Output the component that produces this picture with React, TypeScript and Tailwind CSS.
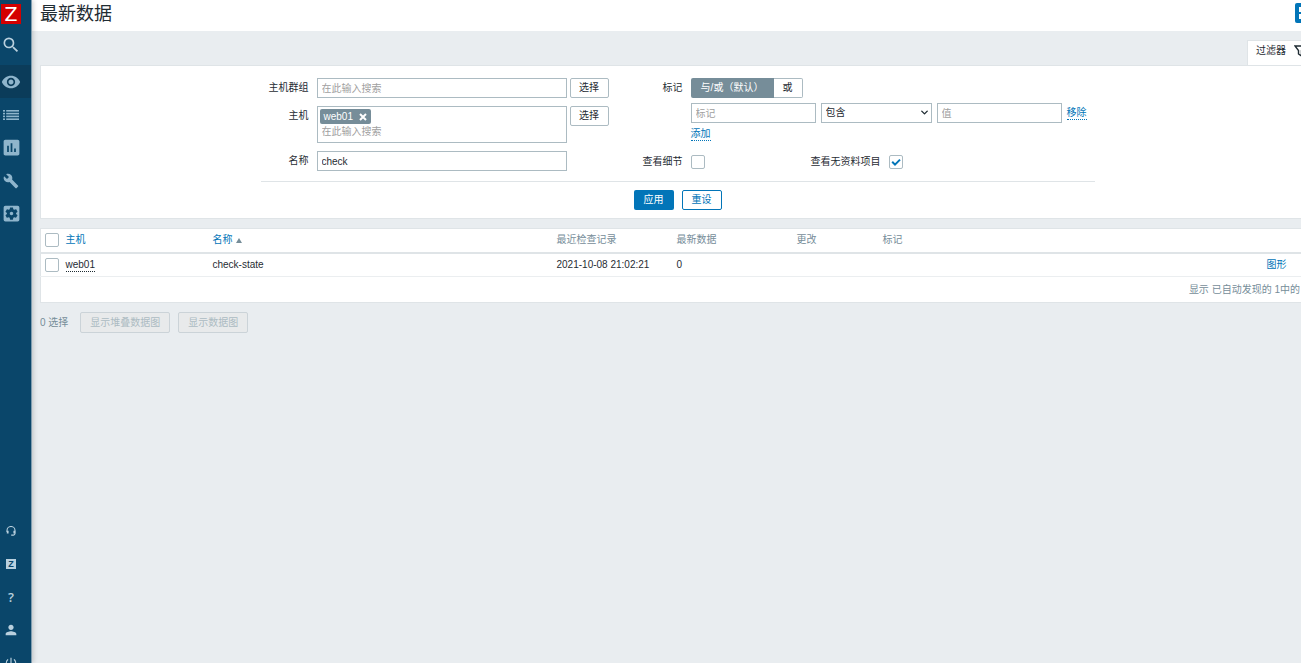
import { ReactNode } from 'react';
import clsx from 'clsx';
import {
  MdSearch,
  MdVisibility,
  MdInsertChart,
  MdBuild,
  MdSettingsApplications,
  MdPerson,
  MdPowerSettingsNew,
} from 'react-icons/md';
import { LuChevronDown } from 'react-icons/lu';

const field =
  'h-5 border border-[#acbbc2] bg-white px-1 text-[10px] text-[#1f2c33] placeholder:text-[#a0a0a0] outline-none';
const link = 'text-[#0275b8] border-b border-dotted border-[#0275b8]';

function ListIcon() {
  return (
    <svg viewBox="0 0 16 10" className="w-4 h-[10px]" fill="currentColor">
      {[0, 2.8, 5.6, 8.4].map((y) => (
        <g key={y}>
          <rect x="0" y={y} width="2" height="1.6" />
          <rect x="3.2" y={y} width="12.8" height="1.6" />
        </g>
      ))}
    </svg>
  );
}

function SupportIcon() {
  return (
    <svg viewBox="0 0 10 10" className="w-[10px] h-[10px]" fill="none" stroke="currentColor">
      <path d="M1 6V4.5a4 4 0 0 1 8 0V7.5a1.6 1.6 0 0 1-1.6 1.6H5.2" strokeWidth="1.1" />
      <path d="M1.7 4.8v2.7M8.3 4.8v2.7" strokeWidth="1.8" />
    </svg>
  );
}

const mainNav = [
  { label: '监测', icon: <MdVisibility size={20} />, active: true },
  { label: '资产记录', icon: <ListIcon /> },
  { label: '报表', icon: <MdInsertChart size={21} /> },
  { label: '配置', icon: <MdBuild size={16} /> },
  { label: '管理', icon: <MdSettingsApplications size={21} /> },
];

const userNav = [
  { label: '支持', icon: <SupportIcon /> },
  {
    label: 'Share',
    icon: (
      <span className="w-[10px] h-[10px] bg-[#b9d0de] text-[#0a466a] text-[9px] leading-[10px] font-bold text-center">
        Z
      </span>
    ),
  },
  { label: '帮助', icon: <span className="font-['Open_Sans',sans-serif] text-[13px] font-semibold leading-4">?</span> },
  { label: '用户', icon: <MdPerson size={16} /> },
  { label: '退出', icon: <MdPowerSettingsNew size={14} /> },
];

function NavItem({ label, active, children }: { label: string; active?: boolean; children: ReactNode }) {
  return (
    <a
      href="#"
      aria-label={label}
      className={clsx('flex h-[33px] items-center', active && 'bg-[#0b3c5a]')}
    >
      <span className="flex w-[22px] justify-center">{children}</span>
    </a>
  );
}

function Sidebar() {
  return (
    <aside className="z-10 flex h-screen w-8 shrink-0 flex-col overflow-hidden border-r border-[#7f9db0] bg-[#0a466a] text-[#8fb5cc] shadow-[1px_0_5px_rgba(0,0,0,0.2)]">
      <a
        href="#"
        className="ml-px mt-1 flex h-5 w-5 shrink-0 items-center justify-center bg-[#d40000] font-['DejaVu_Sans',sans-serif] text-[19px] leading-5 text-white"
      >
        Z
      </a>
      <button type="button" aria-label="搜索" className="flex h-[41px] w-[22px] shrink-0 items-center justify-center text-[#b9d0de]">
        <MdSearch size={20} />
      </button>
      <nav className="shrink-0">
        {mainNav.map((item) => (
          <NavItem key={item.label} label={item.label} active={item.active}>
            {item.icon}
          </NavItem>
        ))}
      </nav>
      <nav className="-mb-4 mt-auto shrink-0 text-[#b9d0de]">
        {userNav.map((item) => (
          <NavItem key={item.label} label={item.label}>
            {item.icon}
          </NavItem>
        ))}
      </nav>
    </aside>
  );
}

function SelectButton() {
  return (
    <button type="button" className="h-5 w-[39px] shrink-0 rounded-[2px] border border-[#acbbc2] bg-white">
      选择
    </button>
  );
}

function Checkbox({ id, label, checked }: { id: string; label?: string; checked?: boolean }) {
  return (
    <span className="relative block h-[14px] w-[14px] shrink-0">
      <input
        id={id}
        type="checkbox"
        aria-label={label}
        defaultChecked={checked}
        className="peer block h-[14px] w-[14px] appearance-none rounded-[2px] border border-[#acbbc2] bg-white"
      />
      <svg
        viewBox="0 0 14 14"
        className="pointer-events-none absolute inset-0 hidden peer-checked:block"
        fill="none"
        stroke="#0275b8"
        strokeWidth="2"
      >
        <path d="M3.2 6.8l2.8 2.8 5-5" />
      </svg>
    </span>
  );
}

function Filter() {
  return (
    <form className="flex flex-col items-center border border-[#dfe4e7] bg-white pb-2 pt-3">
      <div className="flex gap-2 border-b border-[#dfe4e7] px-2 pb-[10px]">
        <div className="flex flex-col gap-2">
          <div className="flex gap-2">
            <label htmlFor="groups" className="w-10 text-right leading-5">主机群组</label>
            <div className="flex gap-[3px]">
              <input id="groups" placeholder="在此输入搜索" className={clsx(field, 'w-[250px]')} />
              <SelectButton />
            </div>
          </div>
          <div className="flex gap-2">
            <label htmlFor="hosts" className="w-10 text-right leading-5">主机</label>
            <div className="flex gap-[3px]">
              <div className="flex h-[37px] w-[250px] flex-col items-start border border-[#acbbc2] p-[2px]">
                <span className="flex h-[15px] items-center gap-[6px] rounded-[2px] bg-[#768d99] px-1 text-white">
                  web01
                  <button type="button" aria-label="移除 web01">
                    <svg viewBox="0 0 8 8" className="h-2 w-2" stroke="currentColor" strokeWidth="2">
                      <path d="M1 1l6 6M7 1L1 7" />
                    </svg>
                  </button>
                </span>
                <input
                  id="hosts"
                  placeholder="在此输入搜索"
                  className="h-4 w-full px-[2px] text-[10px] outline-none placeholder:text-[#a0a0a0]"
                />
              </div>
              <SelectButton />
            </div>
          </div>
          <div className="flex gap-2">
            <label htmlFor="name" className="w-10 text-right leading-5">名称</label>
            <input id="name" defaultValue="check" className={clsx(field, 'w-[250px]')} />
          </div>
        </div>

        <div className="flex flex-col">
          <div className="flex gap-2">
            <span className="w-[66px] text-right leading-5">标记</span>
            <div>
              <div className="flex">
                <button type="button" className="h-5 w-[83px] rounded-l-[2px] bg-[#768d99] text-white">
                  与/或（默认）
                </button>
                <button type="button" className="h-5 w-[29px] rounded-r-[2px] border border-l-0 border-[#acbbc2]">
                  或
                </button>
              </div>
              <div className="mt-[5px] flex items-center gap-[5px]">
                <input aria-label="标记" placeholder="标记" className={clsx(field, 'w-[125px]')} />
                <div className="relative">
                  <select aria-label="运算符" className={clsx(field, 'block w-[111px] appearance-none')}>
                    <option>包含</option>
                    <option>等于</option>
                  </select>
                  <LuChevronDown
                    size={11}
                    strokeWidth={3}
                    className="pointer-events-none absolute right-[2px] top-1"
                  />
                </div>
                <input aria-label="值" placeholder="值" className={clsx(field, 'w-[125px]')} />
                <button type="button" className={clsx(link, 'leading-3')}>移除</button>
              </div>
              <button type="button" className={clsx(link, 'mt-[5px] block leading-3')}>添加</button>
            </div>
          </div>
          <div className="mt-[13px] flex items-center gap-2">
            <label htmlFor="details" className="w-[66px] text-right">查看细节</label>
            <Checkbox id="details" />
            <label htmlFor="empty" className="ml-[98px]">查看无资料项目</label>
            <Checkbox id="empty" checked />
          </div>
        </div>
      </div>
      <div className="mt-2 flex gap-2">
        <button type="submit" className="h-5 w-10 rounded-[2px] bg-[#0275b8] text-white">应用</button>
        <button type="reset" className="h-5 w-10 rounded-[2px] border border-[#0275b8] text-[#0275b8]">重设</button>
      </div>
    </form>
  );
}

function DataTable() {
  return (
    <table className="w-full table-fixed border border-[#dfe4e7] bg-white text-left [&_td]:pl-1 [&_th]:pl-1 [&_th]:font-normal">
      <colgroup>
        <col className="w-[21px]" />
        <col className="w-[147px]" />
        <col className="w-[344px]" />
        <col className="w-[120px]" />
        <col className="w-[120px]" />
        <col className="w-[86px]" />
        <col />
        <col className="w-[52px]" />
      </colgroup>
      <thead>
        <tr className="h-6 border-b-2 border-[#dfe4e7] text-[#768d99]">
          <th><Checkbox id="all_items" label="全选" /></th>
          <th><a href="#" className="text-[#0275b8]">主机</a></th>
          <th>
            <a href="#" className="flex items-center gap-[3px] text-[#0275b8]">
              名称
              <svg viewBox="0 0 6 5" className="h-[5px] w-[6px]" fill="#768d99">
                <path d="M3 0l3 5H0z" />
              </svg>
            </a>
          </th>
          <th>最近检查记录</th>
          <th>最新数据</th>
          <th>更改</th>
          <th>标记</th>
          <th />
        </tr>
      </thead>
      <tbody>
        <tr className="h-6 border-b border-[#ebeef0]">
          <td><Checkbox id="item_1" label="check-state" /></td>
          <td>
            <a href="#" className="inline-block border-b border-dotted border-[#1f2c33] leading-3">web01</a>
          </td>
          <td>check-state</td>
          <td>2021-10-08 21:02:21</td>
          <td>0</td>
          <td />
          <td />
          <td><a href="#" className="text-[#0275b8]">图形</a></td>
        </tr>
      </tbody>
      <tfoot>
        <tr className="h-[26px] text-right text-[#768d99]">
          <td colSpan={8} className="pr-[14px]">显示 已自动发现的 1中的</td>
        </tr>
      </tfoot>
    </table>
  );
}

export default function App() {
  return (
    <div className="flex h-screen overflow-hidden bg-[#e9edf0] font-['Liberation_Sans','Noto_Sans_CJK_SC',sans-serif] text-[10px] leading-4 text-[#1f2c33]">
      <Sidebar />
      <div className="min-w-0 flex-1">
        {/* content runs a little past the right edge of the window */}
        <div className="-mr-[14px]">
          <header className="flex h-[31px] items-start justify-between bg-white pl-2 pt-[3px]">
            <h1 className="text-[18px] leading-[22px]">最新数据</h1>
            <button type="button" aria-label="全屏" className="flex h-5 w-5 items-center justify-center rounded-[2px] bg-[#0275b8] text-white">
              <svg viewBox="0 0 12 12" className="h-3 w-3" fill="none" stroke="currentColor" strokeWidth="2">
                <path d="M1 5V1h4M11 5V1H7M1 7v4h4M11 7v4H7" />
              </svg>
            </button>
          </header>
          <main className="pl-2 pt-[9px]">
            <div className="flex justify-end">
              <button type="button" className="flex h-[25px] w-[68px] items-center gap-2 border border-b-0 border-[#dfe4e7] bg-white pb-1 pl-2">
                过滤器
                <svg viewBox="0 0 12 12" className="h-3 w-3" fill="none" stroke="currentColor" strokeWidth="1.4">
                  <path d="M1 1h10L7.500 5.500V11l-3-2V5.500z" />
                </svg>
              </button>
            </div>
            <Filter />
            <div className="mt-[9px]">
              <DataTable />
            </div>
            <div className="mt-[9px] flex items-center text-[#768d99]">
              <span className="mr-3">0 选择</span>
              <button type="button" disabled className="mr-2 h-[21px] w-[90px] rounded-[2px] border border-[#cbd3d8] bg-[#e8eaeb] text-[#acbbc2]">
                显示堆叠数据图
              </button>
              <button type="button" disabled className="h-[21px] w-[70px] rounded-[2px] border border-[#cbd3d8] bg-[#e8eaeb] text-[#acbbc2]">
                显示数据图
              </button>
            </div>
          </main>
        </div>
      </div>
    </div>
  );
}
